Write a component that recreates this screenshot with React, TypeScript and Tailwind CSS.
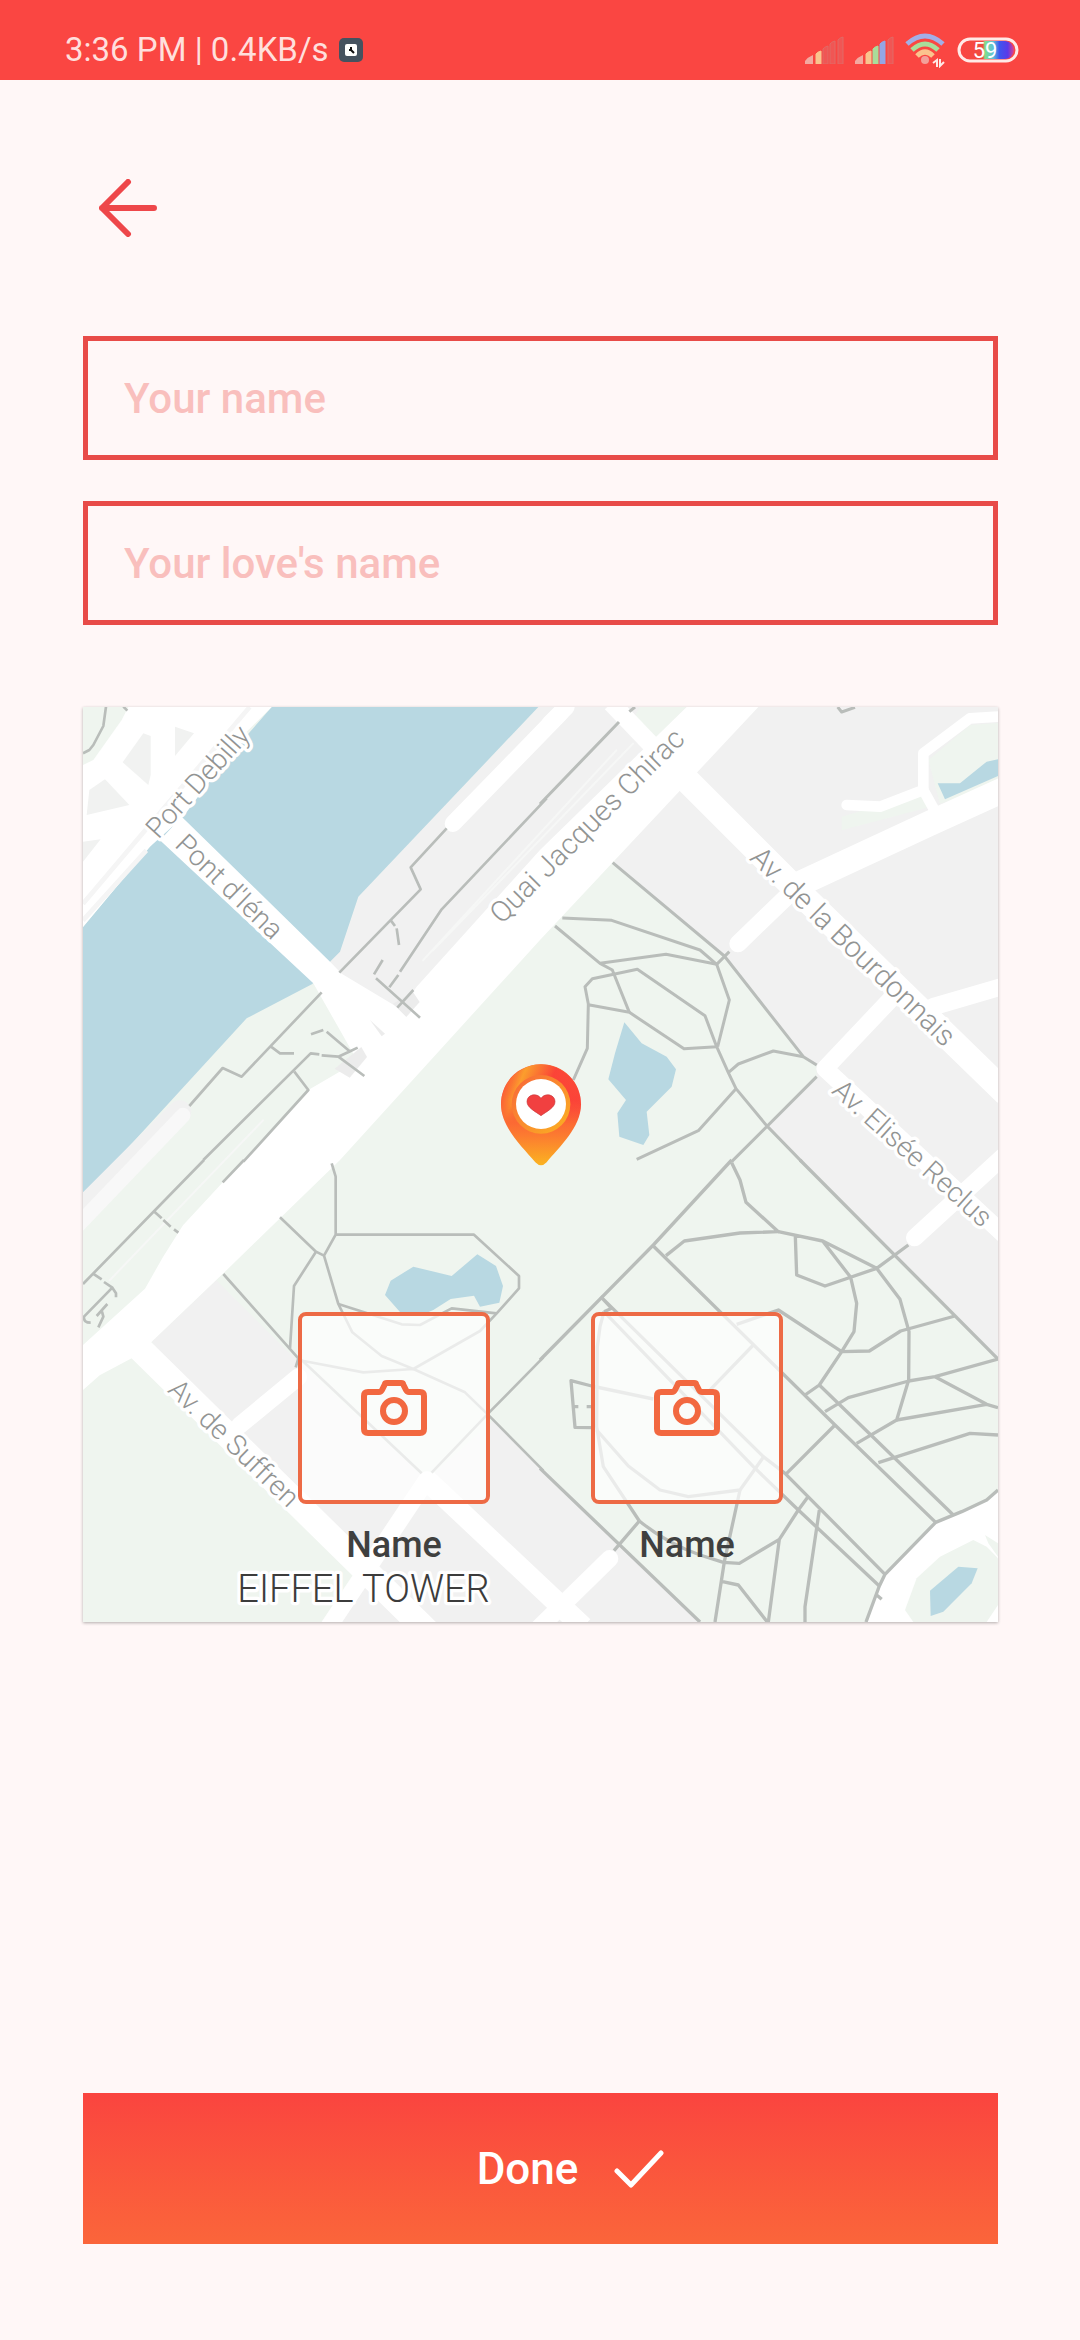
import { useState } from 'react';

const SIGNAL_BARS = [
  { x: 1, h: 7, color: '#f3a9a0' },
  { x: 11, h: 12, color: '#f9c48e' },
  { x: 18, h: 17, color: '#a9dd9a' },
  { x: 25, h: 22, color: '#94a6e4' },
  { x: 33, h: 26, color: '#c98ad0' },
];

const SignalIcon = ({ level }: { level: number }) => (
  <svg className="h-[28px] w-[40px]" viewBox="0 0 40 28">
    {SIGNAL_BARS.map((bar, i) =>
      i === 0 ? (
        <path key={bar.x} d="M0 28v-3q3-4 8-6v9z" fill={bar.color} />
      ) : (
        <path
          key={bar.x}
          d={`M${bar.x} 28v${2 - bar.h}q1-2 5-3v${bar.h + 1}z`}
          fill={i < level ? bar.color : '#f05654'}
          stroke={i < level ? bar.color : '#e06a66'}
          strokeWidth="1"
        />
      )
    )}
  </svg>
);

const WifiIcon = () => (
  <svg className="h-[36px] w-[42px]" viewBox="0 0 42 36" fill="none" strokeWidth="5">
    <path d="M2 12q18-16 36 0" stroke="#a3aee6" />
    <path d="M7 18q13-12 26 0" stroke="#a9dd9a" />
    <path d="M12 24q8-8 16 0" stroke="#fbc48e" />
    <circle cx="20" cy="28" r="4" fill="#f3a09a" />
    <path d="M28 31l4-3v7M39 30l-4 4v-7" stroke="#ffe9e6" strokeWidth="2" />
  </svg>
);

const BatteryIcon = () => (
  <svg className="h-[26px] w-[62px]" viewBox="0 0 62 26">
    <defs>
      <linearGradient id="charge">
        <stop offset="0" stopColor="#fa4642" />
        <stop offset="0.400" stopColor="#f04a40" />
        <stop offset="0.440" stopColor="#7fe08a" />
        <stop offset="0.600" stopColor="#5fc0d8" />
        <stop offset="0.720" stopColor="#3f55ee" />
        <stop offset="0.880" stopColor="#5a3ae8" />
        <stop offset="1" stopColor="#e0408c" />
      </linearGradient>
    </defs>
    <rect x="5" y="4" width="52" height="18" rx="9" fill="url(#charge)" />
    <rect x="2" y="2" width="58" height="22" rx="11" fill="none" stroke="#ffeae7" strokeWidth="3" />
    <text x="28" y="21" textAnchor="middle" fontSize="22" fill="#fff" className="font-[Roboto,sans-serif]">
      59
    </text>
  </svg>
);

const StatusBar = () => (
  <div className="flex h-20 items-center justify-between bg-[#fa4642] pt-5 pr-[61px] pl-[65px] text-[#ffdfdc]">
    <div className="flex items-center gap-[10px]">
      <span className="text-[33px] leading-[40px]">3:36 PM | 0.4KB/s</span>
      <svg className="h-[24px] w-[24px]" viewBox="0 0 24 24">
        <rect width="24" height="24" rx="5" fill="#45525f" />
        <rect x="6" y="6" width="12" height="12" rx="2" fill="#fff" />
        <path d="M12 9v3l3 3M10 12h2" stroke="#111" strokeWidth="2" fill="none" />
      </svg>
    </div>
    <div className="flex items-center gap-[10px]">
      <SignalIcon level={2} />
      <SignalIcon level={4} />
      <WifiIcon />
      <BatteryIcon />
    </div>
  </div>
);

interface NameFieldProps {
  label: string;
  value: string;
  onChange: (value: string) => void;
}

const NameField = ({ label, value, onChange }: NameFieldProps) => (
  <input
    type="text"
    aria-label={label}
    placeholder={label}
    value={value}
    onChange={(e) => onChange(e.target.value)}
    className="block h-[124px] w-full border-[5px] border-[#e84b48] bg-transparent px-9 text-[42px] font-medium text-[#e84b48] outline-none placeholder:text-[#f9bfbd]"
  />
);

const MapPin = () => (
  <g transform="translate(1191 999)">
    <defs>
      <linearGradient id="pinBody" x1="0" y1="0" x2="0" y2="1">
        <stop offset="0" stopColor="#fb6a36" />
        <stop offset="0.350" stopColor="#fb4a3a" />
        <stop offset="0.700" stopColor="#fc7a30" />
        <stop offset="1" stopColor="#fbb321" />
      </linearGradient>
      <linearGradient id="pinShine" x1="0" y1="0.200" x2="1" y2="0.500">
        <stop offset="0" stopColor="#fb4038" stopOpacity="0.500" />
        <stop offset="0.250" stopColor="#fba52c" stopOpacity="0.900" />
        <stop offset="0.600" stopColor="#fb4038" stopOpacity="0.900" />
        <stop offset="1" stopColor="#fb4038" stopOpacity="0.600" />
      </linearGradient>
      <linearGradient id="pinFade" x1="0" y1="0" x2="0" y2="1">
        <stop offset="0" stopColor="#fff" />
        <stop offset="0.600" stopColor="#fff" />
        <stop offset="1" stopColor="#000" />
      </linearGradient>
      <mask id="pinMask">
        <rect x="60" y="70" width="246" height="180" fill="url(#pinFade)" />
      </mask>
      <linearGradient id="pinRing" x1="0" y1="0" x2="1" y2="1">
        <stop offset="0" stopColor="#f8653a" />
        <stop offset="1" stopColor="#fbb321" />
      </linearGradient>
    </defs>
    <path
      d="M183 73c-68 0-120 53-120 120 0 70 65 128 103 174q17 18 34 0c38-46 103-104 103-174 0-67-52-120-120-120z"
      fill="url(#pinBody)"
    />
    <path
      d="M63 193a120 120 0 01240 0c0 20-6 38-14 56H77c-8-18-14-36-14-56z"
      fill="url(#pinShine)"
      mask="url(#pinMask)"
    />
    <circle cx="183" cy="193" r="88" fill="url(#pinRing)" />
    <circle cx="183" cy="192" r="75" fill="#fff" />
    <path
      d="M183 227c-16-12-42-24-42-42 0-22 30-28 42-10 12-18 42-12 42 10 0 18-26 30-42 42z"
      fill="#f14040"
      stroke="#c93a3c"
      strokeWidth="2"
    />
  </g>
);

const MAP_LABELS = [
  { text: 'Port Debilly', x: 226, y: 398, angle: -48, size: 84 },
  { text: "Pont d'Iéna", x: 272, y: 417, angle: 44, size: 84 },
  { text: 'Quai Jacques Chirac', x: 1256, y: 654, angle: -45, size: 87 },
  { text: 'Av. de la Bourdonnais', x: 1997, y: 457, angle: 44, size: 87 },
  { text: 'Av. Elisée Reclus', x: 2243, y: 1156, angle: 42, size: 84 },
  { text: 'Av. de Suffren', x: 251, y: 2053, angle: 44, size: 84 },
];

const CityMap = () => (
  <svg className="absolute inset-0 h-full w-full" viewBox="0 0 2745 2745" aria-hidden="true">
    <rect width="2745" height="2745" fill="#eff5ef" />

    {/* city blocks */}
    <g fill="#f1f1f1">
      <path d="M1366 0H1900L1001 900 960 930 770 800 741 764 771 734 826 569z" />
      <path d="M2026 0H2745V1959L2051 1256 2201 1109V1074L2161 1049 1926 747 1589 469 1786 249z" />
      <path d="M206 1904L400 1720 631 1950 1031 2320 1231 2139 1850 2745H730L815 2600z" />
    </g>
    <g fill="#eff5ef">
      <path d="M2536 159L2661 54 2745 48V230L2571 290z" />
      <path d="M2276 370V329L2511 259 2540 300z" />
      <path d="M1670 0H1811L1720 90 1650 40z" />
    </g>

    {/* water */}
    <g fill="#b8d8e2">
      <path d="M566 0H1366L826 569 771 734 741 764 688 831 491 934 101 1359 0 1470V660L200 420z" />
      <path d="M1624 946L1676 1009 1751 1049 1779 1087 1766 1139 1691 1214 1699 1284 1681 1314 1609 1289 1603 1219 1629 1179 1576 1117 1596 1039z" />
      <path d="M2564 229H2631L2711 164 2745 157V207L2586 277z" />
      <path d="M906 1764L923 1721 991 1679 1106 1707 1183 1642 1239 1677 1260 1737 1249 1787 1191 1799 1173 1766 1103 1776 1051 1809 1021 1822 951 1815z" />
    </g>

    {/* north west junction */}
    <path d="M0 0H566L490 75 300 330 200 420 0 660z" fill="#fff" />
    <path d="M500 0L0 590M190 430L0 640" stroke="#f5f5f5" strokeWidth="14" />
    <g transform="translate(-9 -21)" fill="#f1f2f1">
      <path d="M9 21H145L125 60 40 180 9 195z" fill="#eff5ef" />
      <path d="M190 100L212 108V225L205 255 128 187z" />
      <path d="M285 80L342 100 285 168z" />
      <path d="M75 238L148 315 20 345 28 270z" />
      <path d="M9 425L62 418 9 485z" />
    </g>

    {/* river side lanes */}
    <g fill="none" strokeLinecap="round">
      <path d="M290 1215L-30 1535" stroke="#f1f1f1" strokeWidth="70" />
      <path d="M300 1225L-30 1570" stroke="#f8f8f8" strokeWidth="45" />
      <path d="M1431 20L1110 350" stroke="#fff" strokeWidth="50" />
      <path d="M1450 0L1400 50" stroke="#fff" strokeWidth="50" />
      <path d="M1650 110L1050 730M1600 130L1020 760M540 1240L80 1720" stroke="#f6f7f6" strokeWidth="6" />
    </g>

    {/* bridge and quay */}
    <g fill="#fff">
      <path d="M296 329L741 764 776 800 941 899 1000 900 950 1120 811 1040 691 829 231 400z" />
      <path d="M1811 0H2026L1371 699 771 1359 421 1699 206 1904 146 1954 50 2005 0 2049V1914L186 1745 240 1650 300 1555 676 1149 811 1070 850 1050 1001 839 1371 429z" />
    </g>
    <g fill="#ececec">
      <path d="M835 1020L852 1050 800 1112 755 1085z" />
      <path d="M990 855L1010 885 970 930 930 890z" />
      <path d="M861 939L906 980 896 988z" />
    </g>

    {/* avenues */}
    <g fill="none" stroke="#fff" strokeLinejoin="round">
      <g strokeWidth="76">
        <path d="M1811 219L2131 539 2770 1160" />
        <path d="M2131 539L2541 349 2770 245" />
        <path d="M160 1915L1040 2780" />
      </g>
      <path d="M1031 2319L1500 2760" strokeWidth="64" />
      <path d="M1585 -12L1740 150" strokeWidth="54" />
      <g strokeWidth="52" strokeLinecap="round">
        <path d="M2111 569L1965 710" />
        <path d="M2421 879L2226 1085 2770 1590" />
        <path d="M2770 1340L2495 1592" />
        <path d="M646 2010L470 2155" />
        <path d="M1031 2319L730 2770" />
        <path d="M1580 2555L1360 2770" />
        <path d="M2551 899L2770 835" />
      </g>
      <g strokeWidth="32" strokeLinecap="round">
        <path d="M2291 294L2391 299 2521 249 2521 139 2661 34 2770 27" />
        <path d="M2521 249L2560 320" />
      </g>
    </g>

    {/* roundabout in the south east corner */}
    <path d="M2745 2350L2711 2379 2556 2449 2406 2604 2351 2745H2745z" fill="#fff" />
    <g transform="translate(1371 1359)">
      <path d="M1120 1386L1095 1350 1130 1255 1200 1190 1300 1140 1340 1160 1374 1195V1335L1340 1386z" fill="#eff5ef" />
      <path d="M1335 1125L1374 1150V1190L1345 1150z" fill="#eff5ef" />
      <path d="M1170 1292L1255 1220 1313 1225 1295 1270 1210 1355 1172 1368z" fill="#b8d8e2" />
    </g>

    {/* footpaths */}
    <g fill="none" stroke="#b9bdba" strokeWidth="8" strokeLinejoin="round">
      <g transform="translate(-9 -21)">
        <path d="M78 20L70 78 40 135 28 150 9 160M130 20L142 32" />
        <path d="M1100 385L992 502 1022 568 778 818M930 658L945 678M950 685L957 735" />
        <path d="M1400 295L1085 628 960 815M955 825L928 862M908 780L882 823M888 835L1020 953M1000 870L952 923" />
        <path d="M725 877L485 1130 428 1104 328 1218M573 1040L600 1060H642" />
        <path d="M693 1003L730 990M740 995L808 1053M833 1043L812 1053 775 1070 725 1066M718 1063L692 1060 370 1380M775 1070L853 1128M643 1115L685 1170 490 1385" />
      </g>
      <g transform="translate(1371 -21)" strokeWidth="9">
        <path d="M237 66L0 312M268 35L285 21M893 21L905 36 945 22" />
        <path d="M218 488L553 768 790 1070 830 1095M67 654L215 661 480 750 530 793 568 755" />
        <path d="M45 678L180 790 217 810 268 937M180 790L378 763 530 793 568 900 533 1040" />
        <path d="M100 1140L142 1045 145 912 135 860 157 836 292 808 495 947 530 1040 432 1046 268 937 145 914" />
        <path d="M530 1040L565 1118 588 1166 680 1277 785 1385M565 1118L595 1092 700 1053 790 1070M830 1130L575 1385M588 1166L475 1292 290 1378" />
      </g>
      <g transform="translate(-9 1359)">
        <path d="M372 0L9 372M492 0L428 67" />
        <path d="M220 152L245 175M250 180L272 200M282 208L295 218" />
        <path d="M38 340L65 358M72 366L97 383 12 470Q10 488 32 488M97 383L108 400V412M82 432L50 468M66 455L70 470 55 502" />
        <path d="M755 10L767 50V224L732 287 708 275 600 172M708 275L642 378 630 565M430 342L655 595 647 622M767 224H1182L1317 348V385L1250 460 1200 513 1000 627 905 588 817 517 775 432 732 287" />
        <path d="M775 432L965 493 1020 495 1115 445 1250 460M655 600L850 637 1000 627 1155 697 1230 770M665 600L1025 940M1055 938L1230 755 1390 592M1230 770L1390 932" />
      </g>
      <g transform="translate(1371 1359)" strokeWidth="10">
        <path d="M575 0L340 255 0 600M575 8L600 60 618 127 715 215 600 219 433 243 378 287M340 258L885 795 1187 1087" />
        <path d="M715 215L848 243 1010 325 1105 255M766 230L770 345 855 378 1010 325 1080 418 1107 515 1106 660 1070 780 950 850M848 243L932 352 950 430 942 515 905 575 838 675 795 705" />
        <path d="M780 0L1374 597 1185 650 1106 663 925 713 855 755M1185 650L1340 733 1374 743M1340 733L1070 780M1245 468L1082 513 988 573 905 575 715 450 590 493M838 675L1240 1065M1015 908L1290 820 1374 825" />
        <path d="M182 410L670 890 735 940 1035 1243M192 455L180 500 172 560 170 800 190 920 298 1083M192 455L640 920 775 1050 1018 1278M182 410L215 445 192 455" />
        <path d="M340 717L155 678 93 662 105 802 155 803M98 740H115M140 740H155M170 810L265 918 360 990 445 1010 600 990 670 892M640 555L500 700M885 795L740 940" />
        <path d="M600 990L553 1205 525 1386M0 925L480 1386M298 1083L222 1172M298 1083Q380 1150 480 1185L550 1207 598 1210 718 1138 775 1050 803 1012M718 1138L685 1386M838 1050L795 1340V1386M548 1265L595 1275 682 1386" />
        <path d="M1374 990L1340 1020 1265 1055 1187 1087 1035 1243 1018 1278 978 1386M1010 1305L1025 1318" />
      </g>
    </g>

    <g
      fill="#929493"
      stroke="#fff"
      strokeWidth="20"
      strokeLinejoin="round"
      className="font-[Roboto,sans-serif] font-light [paint-order:stroke]"
    >
      {MAP_LABELS.map((label) => (
        <text
          key={label.text}
          fontSize={label.size}
          transform={`translate(${label.x} ${label.y}) rotate(${label.angle})`}
        >
          {label.text}
        </text>
      ))}
      <text x="463" y="2686" fontSize="114" fill="#3c3c3c">
        EIFFEL TOWER
      </text>
    </g>

    <MapPin />
  </svg>
);

const CameraIcon = () => (
  <svg
    className="h-[56px] w-[66px]"
    viewBox="0 0 66 56"
    fill="none"
    stroke="#f26840"
    strokeWidth="6"
    strokeLinejoin="round"
  >
    <path d="M7 12h11q2 0 3-2l3-6q0-1 2-1h14q2 0 2 1l3 6q1 2 3 2h11q4 0 4 4v33q0 4-4 4H7q-4 0-4-4V16q0-4 4-4z" />
    <circle cx="33" cy="31" r="11" />
  </svg>
);

const PhotoPicker = ({ label }: { label: string }) => (
  <div className="flex flex-col items-center gap-5">
    <button
      type="button"
      aria-label="Add photo"
      className="flex h-48 w-48 items-center justify-center rounded-lg border-4 border-[#ed6a45] bg-white/70"
    >
      <CameraIcon />
    </button>
    <span className="text-[36px] leading-[42px] font-medium text-[#3f403f]">{label}</span>
  </div>
);

const App = () => {
  const [name, setName] = useState('');
  const [loveName, setLoveName] = useState('');

  return (
    <div className="flex min-h-screen flex-col bg-[#fff7f7] font-[Roboto,sans-serif]">
      <StatusBar />

      <main className="flex grow flex-col pt-[99px] pr-[82px] pb-24 pl-[83px]">
        <button type="button" aria-label="Back" className="ml-4 self-start">
          <svg
            className="block h-[58px] w-[58px]"
            viewBox="0 0 58 58"
            fill="none"
            stroke="#ee474a"
            strokeWidth="6"
            strokeLinecap="round"
            strokeLinejoin="round"
          >
            <path d="M55 29H3M29 3L3 29l26 26" />
          </svg>
        </button>

        <div className="mt-[99px] flex flex-col gap-[41px]">
          <NameField label="Your name" value={name} onChange={setName} />
          <NameField label="Your love's name" value={loveName} onChange={setLoveName} />
        </div>

        <div className="relative mt-[82px] flex aspect-square items-end justify-center pb-14 shadow-[0_1px_3px_rgba(0,0,0,0.3)]">
          <CityMap />
          <div className="relative flex gap-[101px]">
            <PhotoPicker label={name || 'Name'} />
            <PhotoPicker label={loveName || 'Name'} />
          </div>
        </div>

        <button
          type="button"
          className="mt-auto flex h-[151px] w-full items-center justify-center gap-9 bg-linear-to-b from-[#fa443f] to-[#fb653a] pl-[60px] text-[44px] font-medium text-white"
        >
          Done
          <svg
            className="h-[38px] w-[50px]"
            viewBox="0 0 50 38"
            fill="none"
            stroke="currentColor"
            strokeWidth="5"
            strokeLinecap="round"
            strokeLinejoin="round"
          >
            <path d="M3 21l14 14L47 3" />
          </svg>
        </button>
      </main>
    </div>
  );
};

export default App;
